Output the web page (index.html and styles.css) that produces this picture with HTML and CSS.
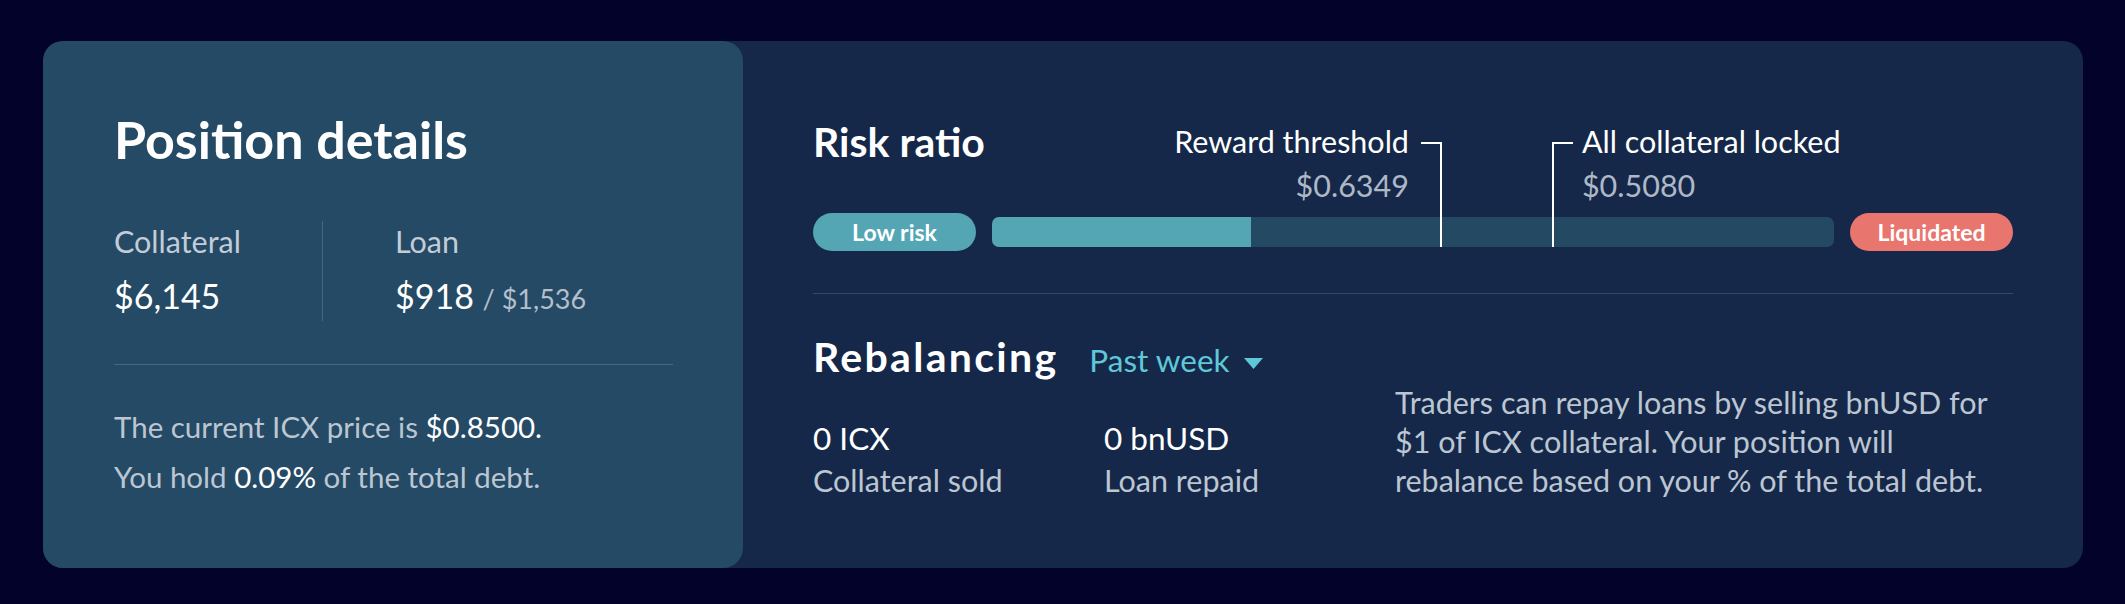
FILE: index.html
```html
<!DOCTYPE html>
<html lang="en">
<head>
<meta charset="utf-8">
<title>Position details</title>
<link rel="stylesheet" href="styles.css">
</head>
<body>
<div class="panel">
  <section class="details">
    <h2 class="details-title">Position details</h2>
    <div class="stats">
      <div class="stat stat-collateral">
        <div class="stat-label">Collateral</div>
        <div class="stat-value">$6,145</div>
      </div>
      <div class="stat stat-loan">
        <div class="stat-label">Loan</div>
        <div class="stat-value">$918 <span class="stat-limit">/ $1,536</span></div>
      </div>
    </div>
    <hr class="details-rule">
    <p class="details-note">The current ICX price is <strong class="hl">$0.8500.</strong><br>You hold <strong class="hl">0.09%</strong> of the total debt.</p>
  </section>

  <section class="overview">
    <h3 class="section-title">Risk ratio</h3>
    <div class="risk-row">
      <span class="pill pill-low">Low risk</span>
      <div class="track">
        <div class="track-fill" style="width:30.8%"></div>
        <div class="marker marker-left" style="left:53.2%">
          <span class="tick"></span>
          <div class="marker-label">
            <div class="marker-name">Reward threshold</div>
            <div class="marker-price">$0.6349</div>
          </div>
        </div>
        <div class="marker marker-right" style="left:66.5%">
          <span class="tick"></span>
          <div class="marker-label">
            <div class="marker-name">All collateral locked</div>
            <div class="marker-price">$0.5080</div>
          </div>
        </div>
      </div>
      <span class="pill pill-liq">Liquidated</span>
    </div>
    <hr class="overview-rule">
    <div class="rebal">
      <div class="rebal-main">
        <div class="rebal-head">
          <h3 class="section-title section-title-wide">Rebalancing</h3>
          <span class="period">Past week <svg class="caret" width="19" height="11" viewBox="0 0 19 11"><path d="M0 0H19L9.5 11Z" fill="currentColor"/></svg></span>
        </div>
        <div class="rebal-stats">
          <div class="rstat">
            <div class="rstat-value">0 ICX</div>
            <div class="rstat-label">Collateral sold</div>
          </div>
          <div class="rstat">
            <div class="rstat-value">0 bnUSD</div>
            <div class="rstat-label">Loan repaid</div>
          </div>
        </div>
      </div>
      <p class="rebal-note">Traders can repay loans by selling bnUSD for<br>$1 of ICX collateral. Your position will<br>rebalance based on your % of the total debt.</p>
    </div>
  </section>
</div>
</body>
</html>
```

FILE: styles.css
```css
* { box-sizing: border-box; }

html, body {
  margin: 0;
  padding: 0;
  background: #02022b;
}

body {
  font-family: "Lato", "Liberation Sans", sans-serif;
  color: #ffffff;
}

.panel {
  display: flex;
  width: 2040px;
  margin: 41px 0 0 43px;
  background: #152849;
  border-radius: 20px;
}

/* Left card */
.details {
  flex: 0 0 700px;
  background: #244a65;
  border-radius: 20px;
  padding: 70px 70px 66px 71px;
}

.details-title {
  margin: 0;
  font-size: 52px;
  line-height: 56px;
  font-weight: 700;
}

.stats {
  display: flex;
  margin-top: 54px;
  padding-bottom: 2px;
}

.stat-collateral {
  flex: 0 0 209px;
  border-right: 1px solid #46687f;
}

.stat-loan {
  padding-left: 72px;
}

.stat-label {
  font-size: 30.5px;
  line-height: 40px;
  color: #c3ccd8;
}

.stat-value {
  margin-top: 13px;
  font-size: 34px;
  line-height: 44px;
  color: #ffffff;
}

.stat-limit {
  font-size: 27px;
  color: #b4bfcc;
}

.details-rule {
  margin: 41px 0 0;
  border: 0;
  height: 1px;
  background: #46687f;
}

.details-note {
  margin: 37px 0 0;
  font-size: 29.5px;
  line-height: 50px;
  color: #bcc6d2;
}

.hl {
  font-weight: 400;
  color: #ffffff;
}

/* Right card */
.overview {
  flex: 1;
  padding: 77px 70px 0 70px;
}

.section-title {
  margin: 0;
  font-size: 41px;
  line-height: 48px;
  font-weight: 700;
}

.section-title-wide {
  letter-spacing: 2.3px;
}

.risk-row {
  display: flex;
  align-items: center;
  gap: 16px;
  margin-top: 47px;
  height: 38px;
}

.pill {
  flex: 0 0 163px;
  height: 38px;
  border-radius: 19px;
  display: flex;
  align-items: center;
  justify-content: center;
  font-size: 23px;
  font-weight: 700;
  color: #ffffff;
}

.pill-low { background: #54a6b4; }
.pill-liq { background: #e9756f; }

.track {
  position: relative;
  flex: 1;
  height: 30px;
  background: #244a63;
  border-radius: 7px;
}

.track-fill {
  height: 100%;
  background: #54a6b4;
  border-radius: 7px 0 0 7px;
}

.marker {
  position: absolute;
  bottom: 0;
  width: 2px;
  height: 105px;
  background: #ffffff;
}

.tick {
  position: absolute;
  top: 0;
  width: 21px;
  height: 2px;
  background: #ffffff;
}

.marker-left .tick { right: 0; }
.marker-right .tick { left: 0; }

.marker-label {
  position: absolute;
  top: -23px;
  white-space: nowrap;
  font-size: 30.5px;
  line-height: 44px;
}

.marker-left .marker-label { right: 33px; text-align: right; }
.marker-right .marker-label { left: 30px; text-align: left; }

.marker-name { color: #ffffff; }
.marker-price { color: #aeb8c6; }

.overview-rule {
  margin: 42px 0 0;
  border: 0;
  height: 1px;
  background: #33496a;
}

.rebal {
  display: flex;
  align-items: flex-end;
  margin-top: 39px;
}

.rebal-main {
  flex: 0 0 580px;
}

.rebal-head {
  display: flex;
  align-items: baseline;
  gap: 31px;
}

.period {
  display: inline-flex;
  align-items: center;
  gap: 14px;
  font-size: 31.5px;
  line-height: 48px;
  color: #5fc8d8;
}

.caret {
  position: relative;
  top: 3px;
}

.rebal-stats {
  display: flex;
  margin-top: 34px;
}

.rstat {
  flex: 0 0 291px;
}

.rstat-value {
  font-size: 31.5px;
  line-height: 40px;
  color: #ffffff;
}

.rstat-label {
  margin-top: 2px;
  font-size: 30.5px;
  line-height: 40px;
  color: #bcc6d2;
}

.rebal-note {
  flex: 1;
  margin: 0;
  font-size: 30.5px;
  line-height: 39px;
  color: #bcc6d2;
  white-space: nowrap;
}
```
